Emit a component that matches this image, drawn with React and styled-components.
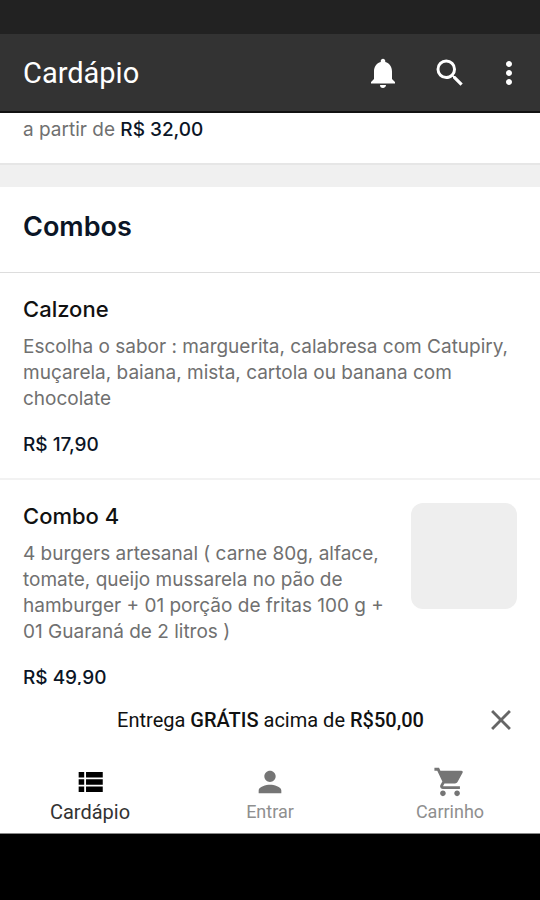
import React from "react";
import styled, { createGlobalStyle } from "styled-components";
import {
  MdNotifications,
  MdSearch,
  MdMoreVert,
  MdPerson,
  MdShoppingCart,
  MdClose,
} from "react-icons/md";

const GlobalStyle = createGlobalStyle`
  *, *::before, *::after { box-sizing: border-box; }
  body {
    margin: 0;
    background: #000;
    font-family: Roboto, "Liberation Sans", sans-serif;
    color: #111;
  }
  h1, h2, h3, p { margin: 0; }
`;

const Screen = styled.div`
  display: flex;
  flex-direction: column;
  height: 100vh;
  background: #fff;
`;

const StatusBar = styled.div`
  flex: none;
  height: 34px;
  background: #222;
`;

const TopBar = styled.header`
  flex: none;
  display: flex;
  align-items: center;
  justify-content: space-between;
  padding: 21px 13px 20px 23px;
  background: #333;
  border-bottom: 2px solid #111;
`;

const PageTitle = styled.h1`
  font-size: 29px;
  line-height: 36px;
  font-weight: 400;
  color: #fff;
`;

const Actions = styled.div`
  display: flex;
  align-items: center;
  gap: 23px;
`;

const IconButton = styled.button`
  display: flex;
  align-items: center;
  justify-content: center;
  padding: 0;
  border: 0;
  background: none;
  color: ${({ $color }) => $color};
  font-size: ${({ $size }) => $size}px;
  cursor: pointer;
`;

const ActionGroup = styled.div`
  display: flex;
  gap: 31px;
`;

const Menu = styled.main`
  flex: 1;
  min-height: 0;
  overflow-y: auto;
  scrollbar-width: none;
  font-family: Inter, Roboto, sans-serif;
`;

const Section = styled.section`
  background: #fff;
`;

const PreviousPrice = styled.p`
  padding: 4px 23px 20px;
  font-size: 19px;
  line-height: 26px;
  color: #707070;
`;

const Divider = styled.div`
  height: 24px;
  background: #f0f0f0;
  border-top: 2px solid #e6e6e6;
`;

const SectionTitle = styled.h2`
  padding: 22px 23px 27px;
  font-size: 27px;
  line-height: 36px;
  font-weight: 600;
  color: #0b1526;
  border-bottom: 1px solid #ddd;
`;

const Item = styled.article`
  display: flex;
  align-items: flex-start;
  gap: 18px;
  padding: 23px 23px 20px;
  border-bottom: 2px solid #f2f2f2;
`;

const ItemText = styled.div`
  flex: 1;
  min-width: 0;
`;

const ItemName = styled.h3`
  font-size: 22px;
  line-height: 26px;
  font-weight: 500;
`;

const Description = styled.p`
  margin: 12px 0 20px;
  font-size: 19px;
  line-height: 26px;
  color: #707070;
`;

const Price = styled.strong`
  font-size: 19px;
  line-height: 26px;
  font-weight: 500;
  color: #0b1526;
`;

const Thumbnail = styled.div`
  flex: none;
  width: 106px;
  height: 106px;
  border-radius: 12px;
  background: #eee;
`;

const Banner = styled.aside`
  flex: none;
  display: grid;
  grid-template-columns: 1fr auto 1fr;
  align-items: center;
  padding: 18px 22px 20px 23px;
  background: #fff;
`;

const BannerText = styled.p`
  grid-column: 2;
  font-size: 20px;
  line-height: 34px;

  strong { font-weight: 500; }
`;

const BannerClose = styled(IconButton)`
  justify-self: end;
`;

const TabBar = styled.nav`
  flex: none;
  display: grid;
  grid-template-columns: repeat(3, 1fr);
  padding: 8px 0;
  border-bottom: 1px solid #888;
`;

const Tab = styled.a`
  display: flex;
  flex-direction: column;
  align-items: center;
  color: ${({ $active }) => ($active ? "#000" : "#757575")};
  font-size: ${({ $active }) => ($active ? 20 : 18)}px;
  line-height: 26px;
  text-decoration: none;

  svg { width: 34px; height: 34px; }
  span { color: ${({ $active }) => ($active ? "#333" : "#8f8f8f")}; }
`;

const SystemBar = styled.div`
  flex: none;
  height: 66px;
  background: #000;
`;

const ListIcon = () => (
  <svg viewBox="0 0 24 24" fill="currentColor" aria-hidden="true">
    <path d="M4 5h3.9v3.9H4zM4 10.1h3.9v3.9H4zM4 15.1h3.9v3.9H4zM9.2 5h11.8v3.9H9.2zM9.2 10.1h11.8v3.9H9.2zM9.2 15.1h11.8v3.9H9.2z" />
  </svg>
);

const items = [
  {
    name: "Calzone",
    text: "Escolha o sabor : marguerita, calabresa com Catupiry, muçarela, baiana, mista, cartola ou banana com chocolate",
    price: "R$ 17,90",
  },
  {
    name: "Combo 4",
    text: "4 burgers artesanal ( carne 80g, alface, tomate, queijo mussarela no pão de hamburger + 01 porção de fritas 100 g + 01 Guaraná de 2 litros )",
    price: "R$ 49,90",
    picture: true,
  },
];

export default function App() {
  return (
    <Screen>
      <GlobalStyle />
      <StatusBar />
      <TopBar>
        <PageTitle>Cardápio</PageTitle>
        <Actions>
          <ActionGroup>
            <IconButton $size={36} $color="#fff" aria-label="Notificações"><MdNotifications /></IconButton>
            <IconButton $size={36} $color="#fff" aria-label="Buscar"><MdSearch /></IconButton>
          </ActionGroup>
          <IconButton $size={36} $color="#fff" aria-label="Mais opções"><MdMoreVert /></IconButton>
        </Actions>
      </TopBar>
      <Menu>
        <Section>
          <PreviousPrice>a partir de <Price>R$ 32,00</Price></PreviousPrice>
        </Section>
        <Divider />
        <Section>
          <SectionTitle>Combos</SectionTitle>
          {items.map((item) => (
            <Item key={item.name}>
              <ItemText>
                <ItemName>{item.name}</ItemName>
                <Description>{item.text}</Description>
                <Price>{item.price}</Price>
              </ItemText>
              {item.picture && <Thumbnail />}
            </Item>
          ))}
        </Section>
      </Menu>
      <Banner>
        <BannerText>Entrega <strong>GRÁTIS</strong> acima de <strong>R$50,00</strong></BannerText>
        <BannerClose $size={34} $color="#666" aria-label="Fechar"><MdClose /></BannerClose>
      </Banner>
      <TabBar>
        <Tab href="#cardapio" $active aria-current="page"><ListIcon /><span>Cardápio</span></Tab>
        <Tab href="#entrar"><MdPerson /><span>Entrar</span></Tab>
        <Tab href="#carrinho"><MdShoppingCart /><span>Carrinho</span></Tab>
      </TabBar>
      <SystemBar />
    </Screen>
  );
}
